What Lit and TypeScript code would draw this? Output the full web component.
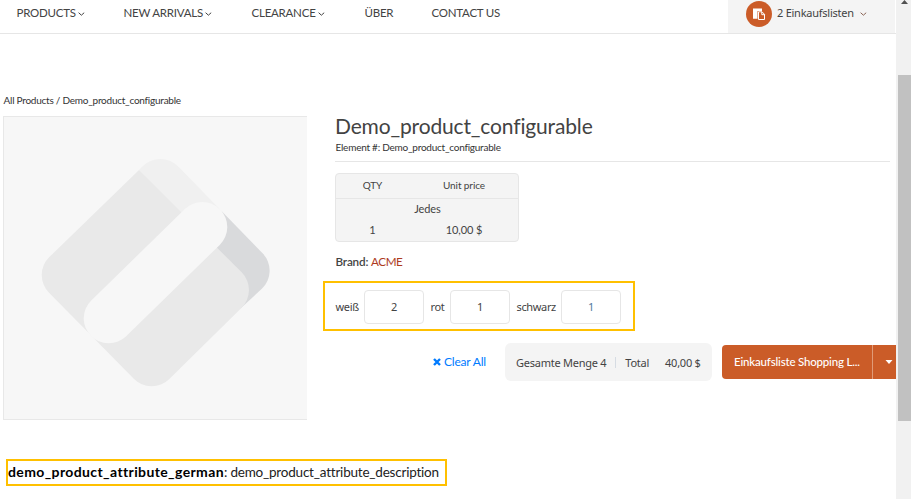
import { LitElement, html, css, svg } from "lit";
import { customElement } from "lit/decorators.js";

const chevron = html`<svg class="chev" viewBox="0 0 7 4" width="7" height="4"><path d="M.6 .7 3.400 3.200 6.200 .7" fill="none" stroke="currentColor" stroke-width="1"/></svg>`;

const placeholderArt = svg`
  <path fill="#f0f0f0" d="M139 60L142.900 56.100A25 25 0 0 1 178.200 56.600L222 101.500L190 115Z"/>
  <path fill="#d9dadc" d="M222 101.500L262.600 143.300A25 25 0 0 1 262.100 178.600L241 198L205 135Z"/>
  <path fill="#e9e9e9" d="M49.300 147.100L139 60L241.900 162.600A25 25 0 0 1 241.400 197.900L169.100 269.200A25 25 0 0 1 133.800 268.700L48.800 182.400A25 25 0 0 1 49.300 147.100Z"/>
  <path fill="none" stroke="#f7f7f7" stroke-width="50" stroke-linecap="round" d="M108.700 208.300L202.300 117"/>
`;

@customElement("app-root")
export class AppRoot extends LitElement {
  static styles = css`
    :host { display: flex; width: 911px; height: 499px; overflow: hidden; background: #fff; color: #434343; font-family: Lato, sans-serif; font-size: 12px; }
    * { box-sizing: border-box; }
    span, a, h1 { white-space: nowrap; }
    .page { width: 896px; height: 499px; overflow: hidden; }
    .header { display: flex; height: 34px; border-bottom: 1px solid #e6e6e6; }
    .nav { display: grid; grid-template-columns: 107px 128px 113px 67px 1fr; width: 728px; padding-left: 16.500px; font-size: 11.500px; letter-spacing: -0.230px; }
    .nav a { display: flex; align-items: center; height: 25px; line-height: 15px; gap: 2px; }
    .chev { flex: none; margin-top: 2px; }
    .lists { display: flex; width: 167px; background: #f4f4f4; padding-left: 18px; }
    .badge { width: 26px; height: 26px; margin-top: 1px; flex: none; }
    .lists span { margin-left: 5px; font: 11px/26px "Noto Sans", sans-serif; letter-spacing: -0.250px; }
    .lists .chev { margin: 12px 0 0 6px; color: #8a6455; }
    .crumbs { height: 82px; padding: 59px 0 0 3.500px; font-size: 10px; line-height: 14px; color: #333; letter-spacing: -0.240px; }
    .product { display: flex; height: 343px; }
    .photo { width: 304px; height: 304px; margin: 0 16px 0 3px; background: #f7f7f7; border: 1px solid #e8e8e8; border-right: 0; flex: none; }
    .photo svg { display: block; margin: -1px 0 0 -1px; }
    .info { width: 573px; flex: none; }
    .heading { margin-left: 12px; height: 46px; border-bottom: 1px solid #e6e6e6; width: 555px; }
    h1 { margin: 0; font-size: 21px; font-weight: 400; line-height: 20px; height: 24px; letter-spacing: -0.150px; }
    .sku { display: block; font-size: 10px; line-height: 14px; color: #333; letter-spacing: -0.240px; padding-left: .5px; }
    .prices { display: grid; grid-template-columns: 73px 110px; grid-template-rows: 25px 19px 22px; width: 184px; height: 69px; margin: 11px 0 0 12px; border: 1px solid #e6e6e6; border-radius: 4px; background: #f4f4f4; text-align: center; font-size: 11px; align-items: center; letter-spacing: -0.1px; }
    .prices .th { font-size: 10px; border-bottom: 1px solid #e6e6e6; height: 25px; line-height: 23px; }
    .prices .unit { grid-column: 1 / 3; }
    .brand { display: block; margin: 10px 0 0 12.500px; line-height: 18px; font-size: 11.700px; letter-spacing: -0.170px; }
    .brand b { font-weight: 600; }
    .brand a { color: #ad3a1e; letter-spacing: -0.450px; }
    .matrix { display: grid; grid-template-columns: 29px 66px 20px 66px 45px 60px; align-items: center; width: 312px; height: 50px; margin-top: 11px; padding-left: 10px; border: 2px solid #ffc000; font: 11px "Noto Sans", sans-serif; letter-spacing: -0.350px; }
    .matrix label { white-space: nowrap; padding-left: .5px; }
    .box { width: 60px; height: 34px; margin-top: 2px; border: 1px solid #e6e6e6; border-radius: 4px; text-align: center; line-height: 31px; }
    .blue { color: #527a9d; }
    .actions { display: flex; height: 38px; margin-top: 12px; }
    .clear { display: flex; flex: none; align-items: center; gap: 3px; width: 72px; margin-left: 110px; color: #007bff; font-size: 12px; height: 37px; letter-spacing: -0.2px; }
    .totals { display: flex; flex: none; align-items: center; width: 207px; padding-left: 11px; border-radius: 6px; background: #f4f4f4; font: 11px "Noto Sans", sans-serif; letter-spacing: -0.250px; }
    .rule { width: 1px; height: 11px; margin: 0 9px; background: #d6dce3; }
    .total { margin-right: 16px; }
    .buy { display: flex; flex: none; align-items: center; width: 174px; height: 34px; margin: 2px 0 0 10px; padding-left: 12px; border-radius: 4px 0 0 4px; background: #cb5c28; color: #fff; font-size: 11.500px; font-weight: 500; letter-spacing: -0.190px; }
    .buy span { width: 138px; padding-bottom: 2px; }
    .drop { display: flex; align-items: center; padding-left: 12px; height: 34px; border-left: 1px solid #e09b78; }
    .attribute { display: flex; align-items: center; width: 441px; height: 27px; margin-left: 6px; border: 2px solid #ffc000; color: #222; font-size: 13.500px; line-height: 20px; letter-spacing: -0.210px; }
    .attribute b { color: #000; font-size: 14px; letter-spacing: 0.380px; }
    .attribute b, .attribute span { padding-bottom: 2px; }
    .scroll { width: 15px; height: 499px; background: #f1f1f1; }
    .scroll svg { display: block; margin-left: 5px; }
    .thumb { width: 13px; height: 346px; margin: 71px 0 0 2px; background: #c1c1c1; }
  `;

  render() {
    return html`
      <div class="page">
        <div class="header">
          <nav class="nav">
            <a><span>PRODUCTS</span>${chevron}</a>
            <a><span>NEW ARRIVALS</span>${chevron}</a>
            <a><span>CLEARANCE</span>${chevron}</a>
            <a>ÜBER</a><a>CONTACT US</a>
          </nav>
          <div class="lists">
            <svg class="badge" viewBox="0 0 26 26"><circle cx="13" cy="13" r="13" fill="#cb5c28"/><path fill="#fff" d="M7 7.500h9v2.500h-4.500v7.700H7z"/><path d="M12.500 10.800h3.500l2.500 2.500v5.200h-6z" fill="#cb5c28" stroke="#fff"/><path d="M15.800 10.800v2.900h2.900" fill="none" stroke="#fff"/></svg>
            <span>2 Einkaufslisten</span>${chevron}
          </div>
        </div>
        <div class="crumbs"><span>All Products / Demo_product_configurable</span></div>
        <div class="product">
          <div class="photo"><svg width="304" height="304" viewBox="3 6 304 304">${placeholderArt}</svg></div>
          <div class="info">
            <div class="heading"><h1>Demo_product_configurable</h1><span class="sku">Element #: Demo_product_configurable</span></div>
            <div class="prices">
              <span class="th">QTY</span><span class="th">Unit price</span>
              <span class="unit">Jedes</span><span>1</span><span>10,00 $</span>
            </div>
            <span class="brand"><b>Brand:</b> <a>ACME</a></span>
            <div class="matrix">
              <label>weiß</label><div class="box">2</div>
              <label>rot</label><div class="box">1</div>
              <label>schwarz</label><div class="box blue">1</div>
            </div>
            <div class="actions">
              <a class="clear"><svg width="8" height="8" viewBox="0 0 8 8"><path d="M1 1l6 6M7 1L1 7" stroke="currentColor" stroke-width="2.400"/></svg><span>Clear All</span></a>
              <div class="totals"><span>Gesamte Menge 4</span><i class="rule"></i><span class="total">Total</span><span>40,00 $</span></div>
              <div class="buy"><span>Einkaufsliste Shopping L...</span><div class="drop"><svg width="8" height="4" viewBox="0 0 8 4"><path fill="#fff" d="M.5 0h7L4 4z"/></svg></div></div>
            </div>
          </div>
        </div>
        <div class="attribute"><b>demo_product_attribute_german</b><span>: demo_product_attribute_description</span></div>
      </div>
      <div class="scroll"><svg width="8" height="4" viewBox="0 0 8 4"><path fill="#505050" d="M0 4L3.500 0 7 4z"/></svg><div class="thumb"></div></div>
    `;
  }
}
